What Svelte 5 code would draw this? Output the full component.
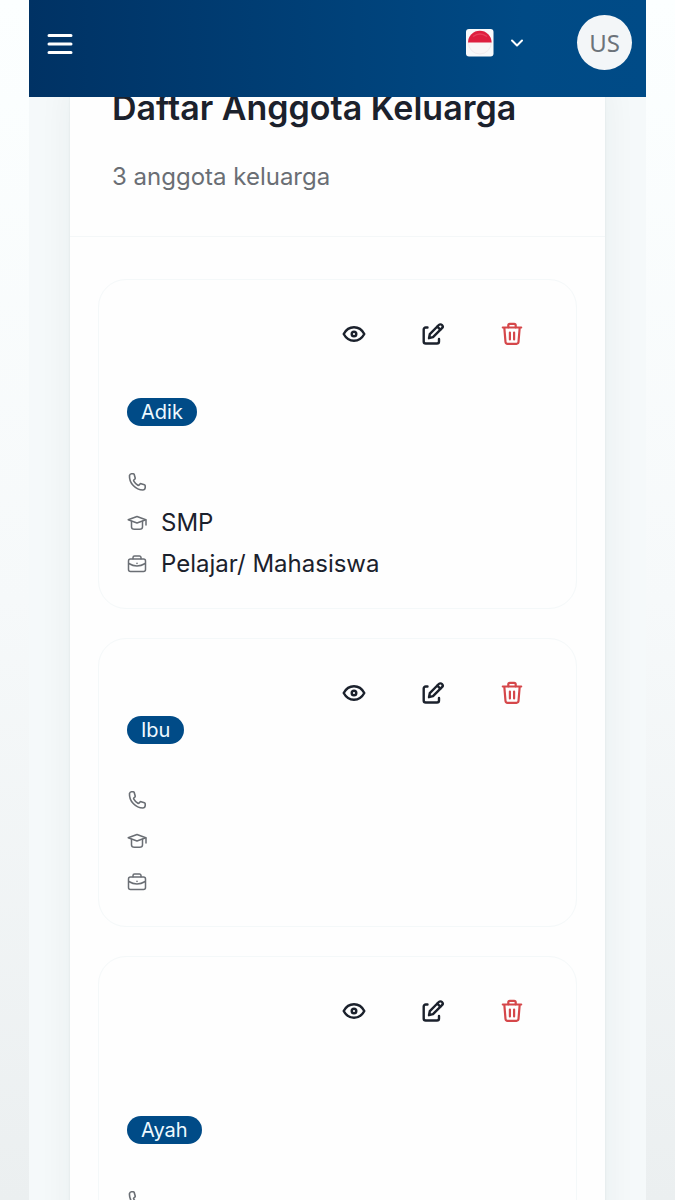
<script lang="ts">
    type Member = {
        relation: string;
        nameLines: number;
        phone: string;
        education: string;
        job: string;
    };

    const members: Member[] = [
        { relation: "Adik", nameLines: 2, phone: "", education: "SMP", job: "Pelajar/ Mahasiswa" },
        { relation: "Ibu", nameLines: 1, phone: "", education: "", job: "" },
        { relation: "Ayah", nameLines: 3, phone: "", education: "", job: "" }
    ];
</script>

<div class="page">
    <div class="screen">
        <header class="topbar">
            <button class="menu" aria-label="Menu">
                <svg width="28" height="28" viewBox="0 0 28 28" fill="none" stroke="currentColor" stroke-width="3" stroke-linecap="round">
                    <path d="M3 6.500h22M3 15h22M3 23.500h22" />
                </svg>
            </button>

            <button class="language" aria-label="Bahasa Indonesia">
                <svg width="28" height="28" viewBox="0 0 28 28">
                    <rect width="27.500" height="27.500" rx="3" fill="#f8f9fb" />
                    <circle cx="13.800" cy="13.500" r="11.500" fill="#f9f6f7" stroke="#f1ebed" stroke-width="1" />
                    <path d="M2 13.500a11.800 11.800 0 0 1 23.600 0z" fill="#de1f3f" />
                    <path d="M7 7.500q7-5 14 0" fill="none" stroke="#e8405a" stroke-width="1.500" />
                </svg>
                <svg width="18" height="18" viewBox="0 0 18 18" fill="none" stroke="currentColor" stroke-width="2" stroke-linecap="round" stroke-linejoin="round">
                    <path d="M4 6.500l5 5 5-5" />
                </svg>
            </button>

            <button class="avatar">US</button>
        </header>

        <main class="content">
            <section class="panel">
                <div class="panel-head">
                    <h1>Daftar Anggota Keluarga</h1>
                    <p>3 anggota keluarga</p>
                </div>

                <div class="cards">
                    {#each members as member}
                        <article class="card">
                            <div class="card-head">
                                <div class="identity">
                                    <div class="name" style="height: {member.nameLines * 41}px"></div>
                                    <span class="badge">{member.relation}</span>
                                </div>
                                <div class="actions">
                                    <button aria-label="Lihat">
                                        <svg width="26" height="26" viewBox="0 0 26 26" fill="none" stroke="currentColor" stroke-width="2.400" stroke-linejoin="round">
                                            <path d="M2.700 13C5 8.700 8.800 6.300 13 6.300s8 2.400 10.300 6.700C21 17.300 17.200 19.700 13 19.700S5 17.300 2.700 13z" />
                                            <circle cx="13" cy="13" r="2.300" />
                                        </svg>
                                    </button>
                                    <button aria-label="Ubah">
                                        <svg width="26" height="26" viewBox="0 0 26 26" fill="none" stroke="currentColor" stroke-width="2.400" stroke-linecap="round" stroke-linejoin="round">
                                            <path d="M7.500 6.500H5.700a2 2 0 0 0-2 2v12a2 2 0 0 0 2 2h11.300a2 2 0 0 0 2-2v-2.500" />
                                            <path d="M9.800 13.200L18.800 4a2.200 2.200 0 0 1 3.200 3.200L13 16.200l-4 1z" />
                                            <path d="M17.300 5.700l3 3" />
                                        </svg>
                                    </button>
                                    <button class="danger" aria-label="Hapus">
                                        <svg width="26" height="26" viewBox="0 0 26 26" fill="none" stroke="currentColor" stroke-width="2.200" stroke-linecap="round" stroke-linejoin="round">
                                            <path d="M3.800 6.500h18.400M5.300 6.500l1.200 14.500a2 2 0 0 0 2 1.800h9a2 2 0 0 0 2-1.800L20.700 6.500" />
                                            <path d="M9.300 6.300V4.300a1.500 1.500 0 0 1 1.500-1.500h4.400a1.500 1.500 0 0 1 1.500 1.500v2M10.900 11.500v7M15.100 11.500v7" />
                                        </svg>
                                    </button>
                                </div>
                            </div>

                            <ul class="details">
                                <li>
                                    <svg width="20" height="20" viewBox="0 0 20 20" fill="none" stroke="currentColor" stroke-width="1.600" stroke-linejoin="round">
                                        <path d="M2.500 3.500Q3 2 4.500 1.800h1.700q.8 0 1 .8l1 3.300q.2.700-.4 1.200l-1 .9q-.4.500 0 1.100 1.500 2.600 4.100 4.100.6.300 1.100-.1l.9-1q.5-.6 1.200-.4l3.300 1.100q.8.300.8 1v2q-.2 2-2.200 2.200C8.500 18 2 11 2.500 3.500z" />
                                    </svg>
                                    <span>{member.phone}</span>
                                </li>
                                <li>
                                    <svg width="20" height="20" viewBox="0 0 20 20" fill="none" stroke="currentColor" stroke-width="1.500" stroke-linecap="round" stroke-linejoin="round">
                                        <path d="M1.200 6.800L10 3.500l8.800 3.300L10 10z" />
                                        <path d="M4.500 8.500v5.500q0 2.300 3 2.300h5q3 0 3-2.300V8.500M19 7v5" />
                                    </svg>
                                    <span>{member.education}</span>
                                </li>
                                <li>
                                    <svg width="20" height="20" viewBox="0 0 20 20" fill="none" stroke="currentColor" stroke-width="1.500" stroke-linecap="round" stroke-linejoin="round">
                                        <rect x="1.500" y="5" width="17" height="12.500" rx="2" />
                                        <path d="M6 4.800V3.500a1.500 1.500 0 0 1 1.500-1.500h5A1.500 1.500 0 0 1 14 3.500v1.300M1.800 9.500Q10 14.500 18.200 9.500M10 9.300v.1" />
                                    </svg>
                                    <span>{member.job}</span>
                                </li>
                            </ul>
                        </article>
                    {/each}
                </div>
            </section>
        </main>
    </div>
</div>

<style>
    :global(body) {
        margin: 0;
    }

    .page {
        height: 100vh;
        padding: 0 29px;
        box-sizing: border-box;
        background: linear-gradient(#fcffff, #f6f9fa 50%, #ebeff0);
        font-family: Inter, "Liberation Sans", sans-serif;
        color: #1b212c;
    }

    .screen {
        height: 100%;
        display: flex;
        flex-direction: column;
        background: #f5f9fa;
    }

    button {
        display: flex;
        align-items: center;
        justify-content: center;
        padding: 0;
        border: none;
        background: none;
        color: inherit;
        font: inherit;
        cursor: pointer;
    }

    .topbar {
        flex: none;
        display: flex;
        align-items: center;
        height: 97px;
        padding: 0 14px 12px 17px;
        box-sizing: border-box;
        background: linear-gradient(90deg, #003264, #004a85 80%, #004b87);
        color: white;
    }

    .language {
        gap: 14px;
        margin-left: auto;
        margin-right: 51px;
    }

    .avatar {
        width: 55px;
        height: 55px;
        border-radius: 50%;
        background: #f3f6f8;
        color: #6c737a;
        font-family: "Noto Sans", sans-serif;
        font-size: 24px;
    }

    .content {
        flex: 1;
        min-height: 0;
        padding: 0 41px;
        overflow-y: auto;
        scrollbar-width: none;
    }

    .panel {
        /* list is scrolled a little way under the top bar */
        margin-top: -11px;
        background: #fefefe;
        box-shadow: 0 0 32px rgba(40, 50, 50, 0.06), 0 0 2px rgba(40, 50, 50, 0.08);
    }

    .panel-head {
        padding: 0 42px 42px;
        border-bottom: 1px solid #f4f7f8;
    }

    h1 {
        margin: 0;
        font-size: 34px;
        line-height: 44px;
        font-weight: 600;
    }

    p {
        margin: 30px 0 0;
        font-size: 24px;
        line-height: 34px;
        color: #6a6e74;
    }

    .cards {
        display: flex;
        flex-direction: column;
        gap: 29px;
        padding: 42px 28px;
    }

    .card {
        padding: 27px 28px;
        border: 1px solid #f4f8f9;
        border-radius: 28px;
    }

    .card-head {
        display: flex;
        align-items: flex-start;
        justify-content: space-between;
    }

    .identity {
        padding-top: 9px;
    }

    .badge {
        display: block;
        padding: 0 14px;
        border-radius: 14px;
        background: #004b87;
        color: #eefaff;
        font-size: 20px;
        line-height: 28px;
    }

    .actions {
        display: flex;
        gap: 7px;
    }

    .actions button {
        width: 72px;
        height: 54px;
    }

    .actions .danger {
        color: #d5474a;
    }

    .details {
        display: flex;
        flex-direction: column;
        gap: 7px;
        margin: 39px 0 0;
        padding: 0;
        list-style: none;
        font-size: 24px;
        line-height: 34px;
    }

    .details li {
        display: flex;
        align-items: center;
        gap: 14px;
        height: 34px;
    }

    .details svg {
        flex: none;
        color: #6a6e74;
    }
</style>
